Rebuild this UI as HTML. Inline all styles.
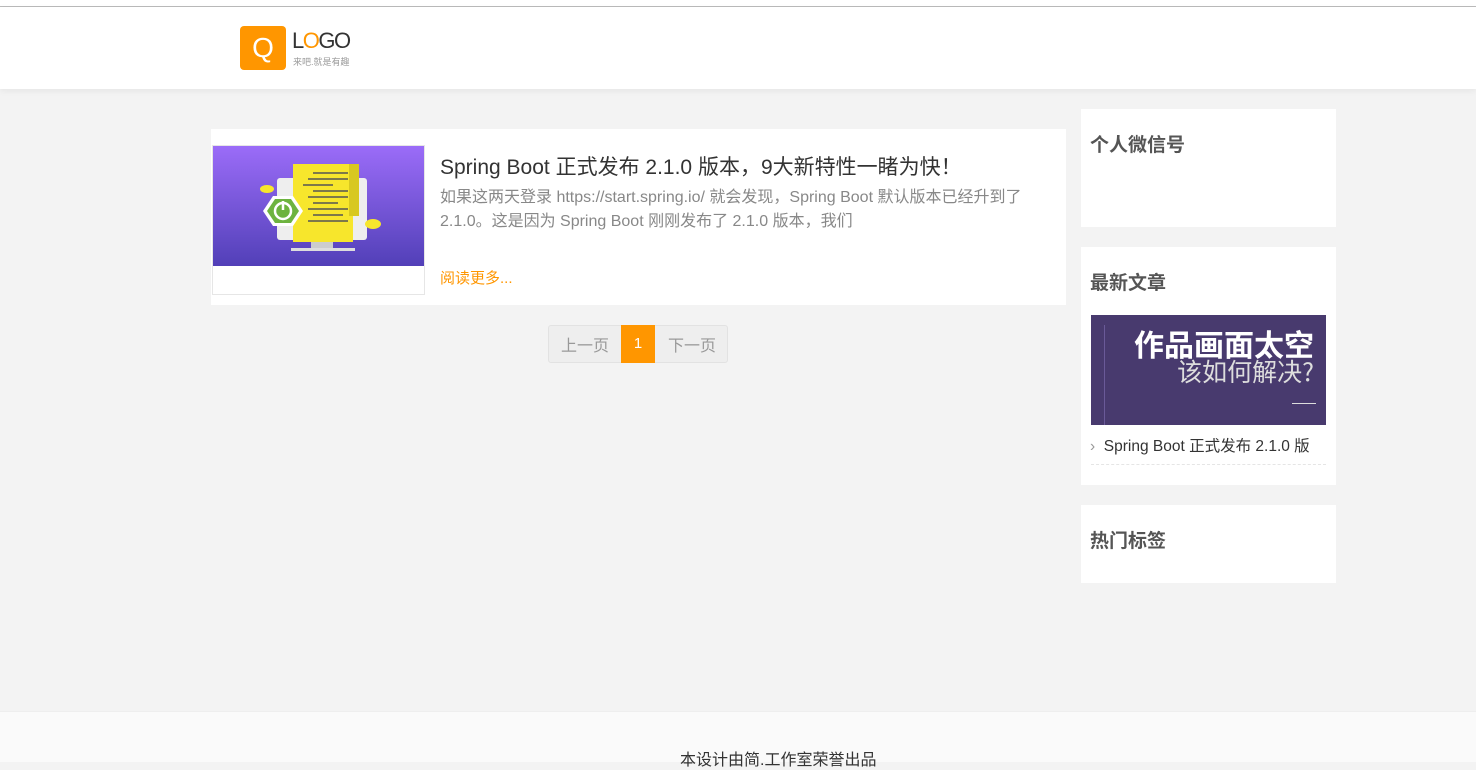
<!DOCTYPE html>
<html><head><meta charset="utf-8"><style>
*{margin:0;padding:0;box-sizing:border-box}
body{width:1476px;height:762px;overflow:hidden;background:#f3f3f3;font-family:"Liberation Sans","Noto Sans CJK SC",sans-serif;position:relative}
.a{position:absolute}
</style></head><body>
<div class="a" style="left:0;top:0;width:1476px;height:6px;background:#fff"></div>
<div class="a" style="left:0;top:6px;width:1476px;height:1px;background:#bbb"></div>
<div class="a" style="left:0;top:7px;width:1476px;height:82px;background:#fff;box-shadow:0 2px 6px rgba(0,0,0,.06)"></div>
<div class="a" style="left:240px;top:26px;width:46px;height:44px;background:#ff9600;border-radius:4px;color:#fff;font-size:28px;text-align:center;line-height:44px">Q</div>
<div class="a" style="left:292px;top:28px;font-size:22px;color:#333;letter-spacing:-1.5px">L<span style="color:#ff9600">O</span>GO</div>
<div class="a" style="left:293px;top:55px;font-size:9px;color:#999">来吧.就是有趣</div>

<div class="a" style="left:211px;top:129px;width:855px;height:176px;background:#fff"></div>
<div class="a" style="left:212px;top:145px;width:213px;height:150px;border:1px solid #e6e6e6;background:#fff;overflow:hidden">
<svg width="213" height="120" viewBox="0 0 213 120" style="display:block">
<defs><linearGradient id="g" x1="0" y1="0" x2="0" y2="1"><stop offset="0" stop-color="#9b6cf8"/><stop offset="1" stop-color="#5240b8"/></linearGradient></defs>
<rect width="213" height="120" fill="url(#g)"/>
<rect x="64" y="32" width="90" height="62" rx="3" fill="#eee"/>
<rect x="98" y="94" width="22" height="8" fill="#ccc"/>
<rect x="78" y="102" width="64" height="3" fill="#ddd"/>
<path d="M80 18h60v78h-60z" fill="#f7e62c"/>
<rect x="136" y="18" width="10" height="52" fill="#d8c820"/>
<g stroke="#555" stroke-width="1.5"><path d="M100 27h35M95 33h40M90 39h30M100 45h35M95 51h40M100 57h25M95 63h40M100 69h30M95 75h40"/></g>
<ellipse cx="54" cy="43" rx="7" ry="4" fill="#f7e62c"/>
<ellipse cx="160" cy="78" rx="8" ry="5" fill="#f7e62c"/>
<polygon points="60,50 80,50 90,65 80,80 60,80 50,65" fill="#fff"/>
<polygon points="62,53 78,53 86,65 78,77 62,77 54,65" fill="#6db33f"/>
<circle cx="70" cy="65" r="8" fill="none" stroke="#fff" stroke-width="2.5"/>
<path d="M70 55v9" stroke="#fff" stroke-width="2.5"/>
</svg></div>
<div class="a" style="left:440px;top:151px;font-size:21px;color:#333">Spring Boot 正式发布 2.1.0 版本，9大新特性一睹为快！</div>
<div class="a" style="left:440px;top:186px;width:600px;font-size:16px;line-height:24px;color:#888">如果这两天登录 https://start.spring.io/ 就会发现，Spring Boot 默认版本已经升到了 2.1.0。这是因为 Spring Boot 刚刚发布了 2.1.0 版本，我们</div>
<div class="a" style="left:440px;top:267px;font-size:15px;color:#ff9600">阅读更多...</div>

<div class="a" style="left:548px;top:325px;width:180px;height:38px;background:#eee;border:1px solid #e2e2e2;border-radius:3px"></div>
<div class="a" style="left:561px;top:332px;font-size:16px;color:#999">上一页</div>
<div class="a" style="left:621px;top:325px;width:34px;height:38px;background:#ff9600;color:#fff;font-size:15px;text-align:center;line-height:38px">1</div>
<div class="a" style="left:668px;top:332px;font-size:16px;color:#999">下一页</div>

<div class="a" style="left:1081px;top:109px;width:255px;height:118px;background:#fff"></div>
<div class="a" style="left:1090px;top:130px;font-size:19px;font-weight:bold;color:#555">个人微信号</div>
<div class="a" style="left:1081px;top:247px;width:255px;height:238px;background:#fff"></div>
<div class="a" style="left:1090px;top:268px;font-size:19px;font-weight:bold;color:#555">最新文章</div>
<div class="a" style="left:1091px;top:315px;width:235px;height:110px;background:#483a6e;overflow:hidden">
<div class="a" style="left:13px;top:10px;width:1px;height:100px;background:#6a5a98"></div>
<div class="a" style="right:12px;top:6px;font-size:30px;font-weight:bold;color:#fff;font-family:'Noto Sans CJK SC',sans-serif">作品画面太空</div>
<div class="a" style="right:12px;top:38px;font-size:25px;color:#ddd;font-family:'Noto Sans CJK SC',sans-serif">该如何解决?</div>
<div class="a" style="right:10px;top:88px;width:24px;height:1px;background:#ddd"></div>
</div>
<div class="a" style="left:1090px;top:434px;font-size:15.5px;color:#333"><span style="color:#999">›</span>&nbsp; Spring Boot 正式发布 2.1.0 版</div>
<div class="a" style="left:1091px;top:464px;width:235px;border-top:1px dashed #e5e5e5"></div>
<div class="a" style="left:1081px;top:505px;width:255px;height:78px;background:#fff"></div>
<div class="a" style="left:1090px;top:526px;font-size:19px;font-weight:bold;color:#555">热门标签</div>

<div class="a" style="left:0;top:711px;width:1476px;height:51px;background:#fafafa;border-top:1px solid #eee"></div>
<div class="a" style="left:680px;top:746px;font-size:16px;color:#333">本设计由简.工作室荣誉出品</div>
</body></html>
